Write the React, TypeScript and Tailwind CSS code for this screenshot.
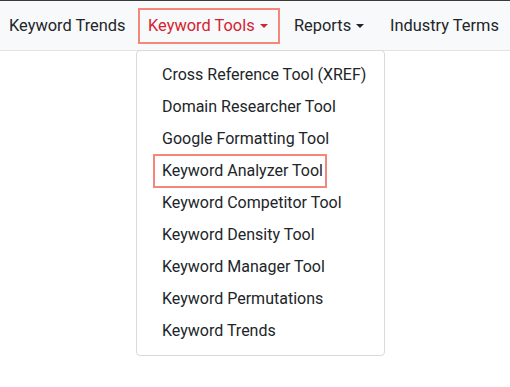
import React from "react";

const items = [
  "Cross Reference Tool (XREF)",
  "Domain Researcher Tool",
  "Google Formatting Tool",
  "Keyword Analyzer Tool",
  "Keyword Competitor Tool",
  "Keyword Density Tool",
  "Keyword Manager Tool",
  "Keyword Permutations",
  "Keyword Trends",
];

function Caret({ color }: { color: string }) {
  return (
    <span
      className="ml-[5px] inline-block h-0 w-0 border-x-[4px] border-t-[4px] border-x-transparent align-middle"
      style={{ borderTopColor: color }}
    />
  );
}

export default function App() {
  return (
    <div
      className="relative h-[387px] w-[510px] overflow-hidden bg-white leading-6 text-[#212529]"
      style={{ fontFamily: "Roboto, 'Liberation Sans', sans-serif" }}
    >
      <div className="h-px bg-[#3a3a3a]" />
      <nav className="flex h-[50px] items-center border-b border-[#e3e3e3] bg-[#f8f9fa] text-[16.4px]">
        <div className="w-[138px] shrink-0 pl-[9px]">Keyword Trends</div>
        <div className="flex h-[36px] w-[142px] shrink-0 items-center border-2 border-[#f4877a] pl-[8px] text-[#d42331]">
          Keyword Tools
          <Caret color="#d42331" />
        </div>
        <div className="flex w-[110px] shrink-0 items-center pl-[14px]">
          Reports
          <Caret color="#212529" />
        </div>
        <div className="shrink-0 whitespace-nowrap">Industry Terms</div>
      </nav>
      <div className="absolute left-[136px] top-[50px] w-[249px] rounded-[4px] border border-[#d9d9d9] bg-white py-2 text-[16px]">
        {items.map((t, i) => (
          <div key={i} className="relative h-8 whitespace-nowrap px-[25px] py-1">
            {t}
            {i === 3 && (
              <span className="absolute left-[16px] top-[-1px] h-[34px] w-[174px] border-2 border-[#f4877a]" />
            )}
          </div>
        ))}
      </div>
    </div>
  );
}
